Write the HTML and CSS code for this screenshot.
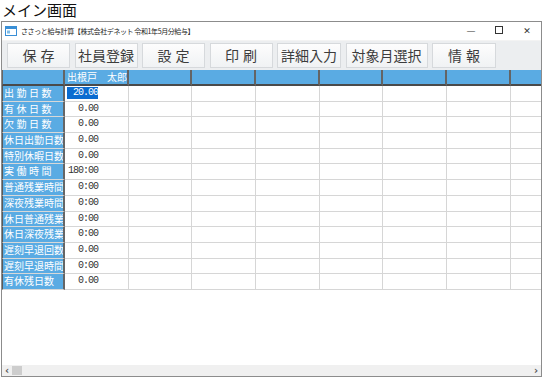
FILE: index.html
```html
<!DOCTYPE html>
<html lang="ja">
<head>
    <meta charset="UTF-8">
    <title>メイン画面</title>
    <link rel="stylesheet" href="styles.css">
</head>
<body>
    <div class="caption">メイン画面</div>

    <div class="window">
        <div class="titlebar">
            <svg class="app-icon" width="12" height="10" viewBox="0 0 12 10">
                <rect x="0.5" y="0.5" width="11" height="9" fill="#fff" stroke="#3a8fd6"/>
                <rect x="1" y="1" width="10" height="2" fill="#3a8fd6"/>
                <rect x="2" y="4.5" width="3" height="3" fill="#7fbce8"/>
            </svg>
            <span class="title">ささっと給与計算【株式会社デネット 令和1年5月分給与】</span>
            <div class="controls">
                <span class="ctl">&#8212;</span>
                <span class="ctl ctl-max"></span>
                <span class="ctl">&#10005;</span>
            </div>
        </div>

        <div class="toolbar">
            <button class="tool tool-wide2">保存</button>
            <button class="tool">社員登録</button>
            <button class="tool tool-wide2">設定</button>
            <button class="tool tool-wide2">印刷</button>
            <button class="tool tool-w64">詳細入力</button>
            <button class="tool tool-w82">対象月選択</button>
            <button class="tool tool-wide2 tool-w64">情報</button>
        </div>

        <div class="sheet">
            <div class="grid grid-head">
                <div class="hd corner"></div>
                <div class="hd">出根戸　太郎</div>
                <div class="hd"></div>
                <div class="hd"></div>
                <div class="hd"></div>
                <div class="hd"></div>
                <div class="hd"></div>
                <div class="hd"></div>
                <div class="hd last"></div>
            </div>
            <div class="grid" id="rows"></div>
        </div>

        <div class="hscroll">
            <span class="arrow">&#8249;</span>
            <span class="thumb"></span>
            <span class="spacer"></span>
            <span class="arrow">&#8250;</span>
        </div>
    </div>

    <script>
        // 行データ
        const rows = [
            ['出勤日数', '20.00', true],
            ['有休日数', '0.00', true],
            ['欠勤日数', '0.00', true],
            ['休日出勤日数', '0.00'],
            ['特別休暇日数', '0.00'],
            ['実働時間', '180:00', true],
            ['普通残業時間', '0:00'],
            ['深夜残業時間', '0:00'],
            ['休日普通残業', '0:00'],
            ['休日深夜残業', '0:00'],
            ['遅刻早退回数', '0.00'],
            ['遅刻早退時間', '0:00'],
            ['有休残日数', '0.00']
        ];

        const box = document.getElementById('rows');
        rows.forEach((r, i) => {
            let html = '<div class="rh' + (r[2] ? ' rh-spaced' : '') + '">' + r[0] + '</div>';
            const sel = i === 0 ? ' val-sel' : '';
            html += '<div class="cell"><span class="val' + sel + '">' + r[1] + '</span></div>';
            for (let c = 0; c < 6; c++) html += '<div class="cell"></div>';
            html += '<div class="cell last"></div>';
            box.insertAdjacentHTML('beforeend', html);
        });
    </script>
</body>
</html>
```

FILE: styles.css
```css
body {
    margin: 0;
    background: #fff;
    font-family: "Noto Sans CJK JP", "Noto Sans", sans-serif;
    color: #222;
    width: 545px;
    height: 378px;
    overflow: hidden;
}

.caption {
    height: 21px;
    line-height: 19px;
    padding-left: 2px;
    font-size: 15px;
    color: #111;
}

.window {
    margin-left: 1px;
    width: 539px;
    height: 354px;
    border: 1px solid #8c8c8c;
    display: flex;
    flex-direction: column;
    background: #fff;
}

.titlebar {
    height: 18px;
    display: flex;
    align-items: center;
    padding-left: 3px;
}

.app-icon {
    margin-right: 4px;
}

.title {
    font-size: 7px;
    color: #222;
    letter-spacing: -0.4px;
}

.controls {
    margin-left: auto;
    display: flex;
}

.ctl {
    width: 28px;
    text-align: center;
    font-size: 9px;
    color: #333;
    font-family: "DejaVu Sans", sans-serif;
}

.ctl-max::before {
    content: "";
    display: inline-block;
    width: 6px;
    height: 6px;
    border: 1px solid #333;
}

.toolbar {
    height: 30px;
    box-sizing: border-box;
    padding: 2px 0 0 5px;
    display: flex;
    gap: 4.5px;
    background: #eceef0;
    border-top: 1px solid #f3f3f3;
}

.tool {
    width: 63px;
    height: 25px;
    padding: 0;
    border: 1px solid #d6d9dc;
    background: linear-gradient(#fdfdfd, #f0f2f4);
    font-family: "Noto Sans CJK JP", sans-serif;
    font-size: 14px;
    color: #3c3c3c;
    line-height: 23px;
    white-space: nowrap;
}

.tool-wide2 {
    letter-spacing: 4px;
    padding-left: 4px;
}

.tool-w64 {
    width: 64px;
}

.tool-w82 {
    width: 82px;
}

.sheet {
    flex: 1;
    background: #fff;
}

.grid {
    display: grid;
    grid-template-columns: 63px repeat(7, 63.7px) 1fr;
    grid-auto-rows: 15.7px;
    font-size: 10px;
}

.grid-head {
    grid-auto-rows: 16px;
}

.hd {
    background: #5aabe3;
    border-right: 2px solid #646464;
    border-bottom: 2px solid #4a4a4a;
    box-sizing: border-box;
    font-size: 10px;
    line-height: 14px;
    color: #fff;
    padding-left: 2px;
    white-space: nowrap;
    overflow: hidden;
}

.hd.corner {
    border-left: 1px solid #666;
}

.hd.last {
    border-right: none;
}

.rh {
    background: #5aabe3;
    border-left: 1px solid #5a5a5a;
    border-right: 2px solid #666;
    border-bottom: 1px solid #d8d8d8;
    box-sizing: border-box;
    color: #fff;
    font-size: 10px;
    line-height: 14px;
    padding-left: 1px;
    white-space: nowrap;
    overflow: hidden;
}

.rh-spaced {
    letter-spacing: 2.5px;
}

.cell {
    border-right: 1px solid #d6d6d6;
    border-bottom: 1px solid #d6d6d6;
    box-sizing: border-box;
    padding: 1px 0 0 2px;
    font-size: 10px;
    line-height: 12px;
    white-space: nowrap;
}

.cell.last {
    border-right: none;
}

.val {
    display: inline-block;
    width: 31px;
    height: 12px;
    vertical-align: top;
    text-align: right;
    font-family: "Liberation Mono", monospace;
    font-size: 10px;
    letter-spacing: -1px;
    line-height: 12px;
    color: #333;
}

.val-sel {
    background: #0a6cd0;
    color: #fff;
}

.hscroll {
    height: 11px;
    background: #f0f0f0;
    display: flex;
    align-items: center;
    font-family: "DejaVu Sans", sans-serif;
    font-size: 10px;
    font-weight: bold;
    color: #555;
}

.arrow {
    width: 10px;
    text-align: center;
    line-height: 11px;
}

.thumb {
    width: 10px;
    height: 9px;
    background: #cdcdcd;
}

.spacer {
    flex: 1;
}
```
